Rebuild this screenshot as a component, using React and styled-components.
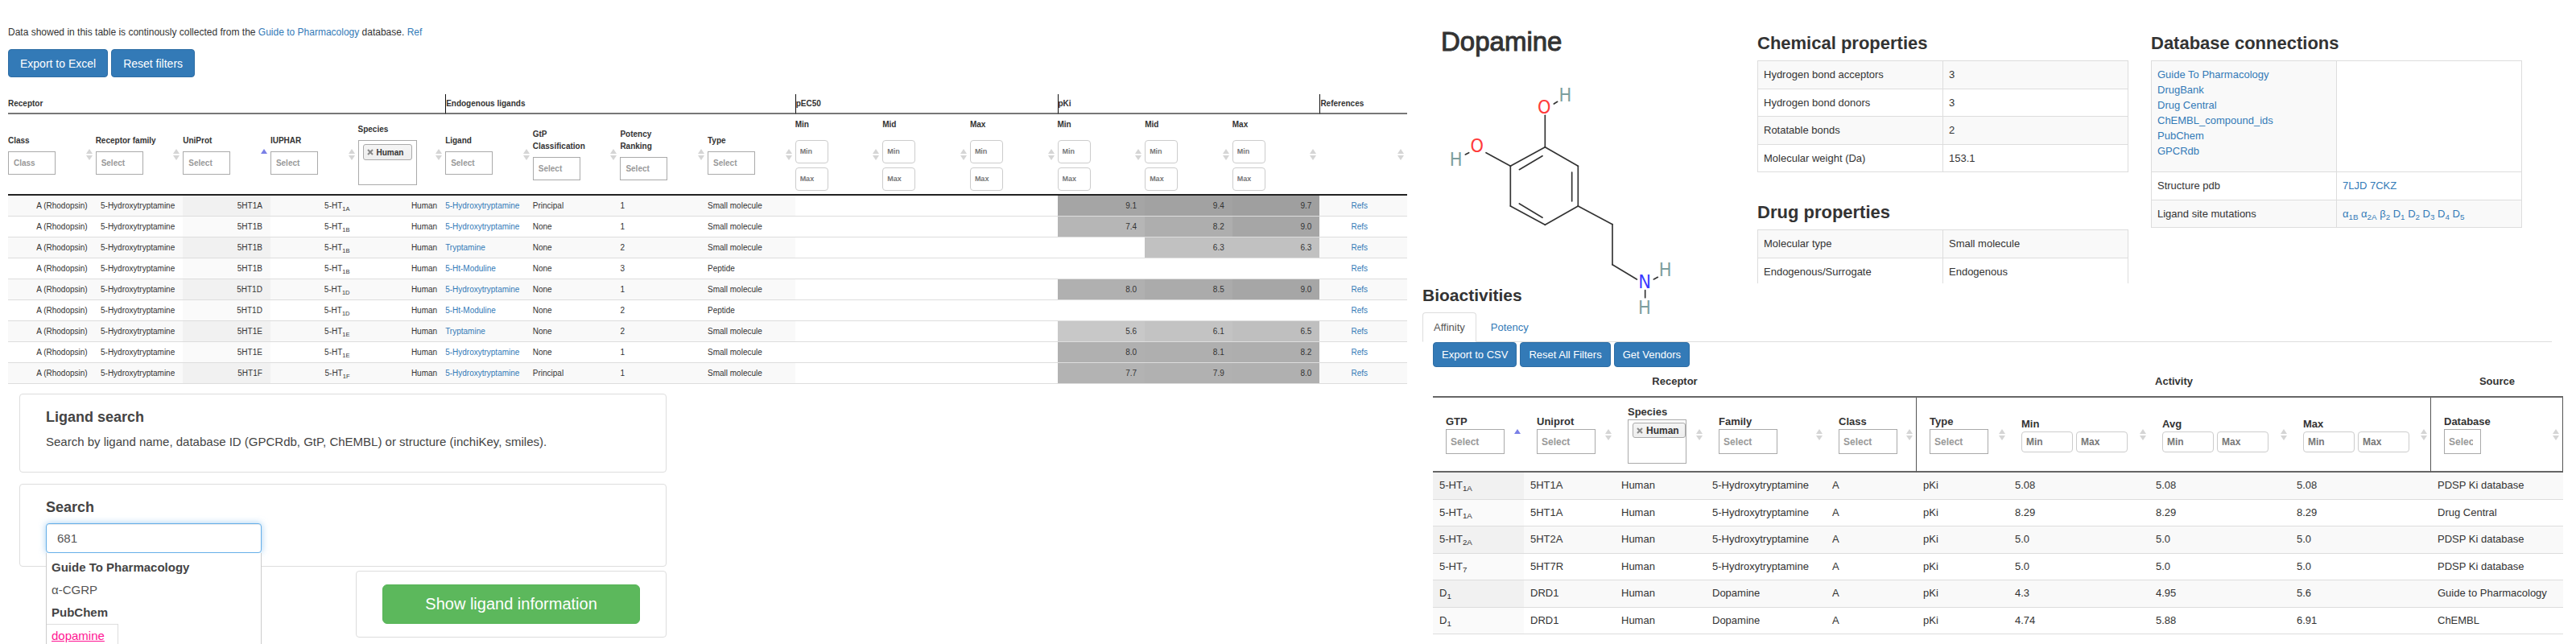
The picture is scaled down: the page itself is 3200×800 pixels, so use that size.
import React from "react";
import styled, { createGlobalStyle, css } from "styled-components";

const GlobalStyle = createGlobalStyle`
  *, *::before, *::after { box-sizing: border-box; }
  body {
    margin: 0;
    background: #fff;
    color: #333;
    font-family: "Helvetica Neue", "Liberation Sans", Arial, sans-serif;
    font-size: 13px;
  }
  h1, h2, p, ul { margin: 0; padding: 0; }
  button, input { font-family: inherit; }
  sub { font-size: 75%; line-height: 0; vertical-align: baseline; position: relative; bottom: -3px; }
`;

const Page = styled.div`
  display: grid;
  grid-template-columns: minmax(0, 1757fr) minmax(0, 1443fr);
  min-height: 100vh;
  overflow: hidden;
`;

const LeftPanel = styled.main`
  padding: 32px 9px 0 10px;
`;

const RightPanel = styled.section`
  min-width: 0;
`;

const Link = styled.a`
  color: #337ab7;
  text-decoration: none;
`;

const Intro = styled.p`
  font-size: 12px;
  line-height: 16px;
`;

const ButtonBar = styled.div`
  display: flex;
  gap: 4px;
  margin: ${(p) => p.$margin};
`;

const PrimaryButton = styled.button`
  height: ${(p) => (p.$large ? 35 : 31)}px;
  padding: 0 ${(p) => (p.$large ? 14 : 10)}px;
  border: 1px solid #2e6da4;
  border-radius: 4px;
  background: #337ab7;
  color: #fff;
  font-size: ${(p) => (p.$large ? 14 : 13)}px;
`;

const SortButton = styled.button`
  flex: none;
  display: block;
  width: 8px;
  height: 14px;
  padding: 0;
  border: 0;
  background: none;
`;

const HeadCell = styled.div`
  display: flex;
  align-items: center;
  justify-content: space-between;
`;

const Field = styled.label`
  display: block;
  white-space: pre-line;
`;

const inputBase = css`
  display: block;
  border: 1px solid #aaa;
  background: #fff;
  font-weight: bold;
  &::placeholder { color: #999; opacity: 1; }
`;

const RangeBase = css`
  ${inputBase}
  border-color: #ccc;
  border-radius: 4px;
  padding: 0 5px;
  &::placeholder { color: #777; opacity: 1; }
`;

const Chip = styled.span`
  display: flex;
  align-items: center;
  gap: 4px;
  border: 1px solid #aaa;
  border-radius: 3px;
  background: linear-gradient(#f4f4f4, #eee);
  font-weight: bold;
  color: #333;
`;

const ChipClose = styled.button`
  display: flex;
  padding: 0;
  border: 0;
  background: none;
`;

const ChipBox = styled.div`
  border: 1px solid #aaa;
  background: #fff;
`;

/* Endogenous ligand table */

const LigandTable = styled.table`
  width: 100%;
  table-layout: fixed;
  border-collapse: separate;
  border-spacing: 0;
  font-size: 10px;
  line-height: 15px;
  text-align: left;

  th, td { padding: 0; }
`;

const GroupHead = styled.th`
  height: 25px;
  border-bottom: 2px solid #777;
  border-left: ${(p) => (p.$divided ? "1px solid #111" : 0)};
`;

const FilterHead = styled.th`
  height: 101px;
  border-bottom: 2px solid #222;

  ${HeadCell} { padding-right: 4px; }
  ${Chip} { height: 20px; padding: 0 4px; font-size: 10px; }
  ${ChipBox} { width: 73px; height: 56px; margin-top: 6px; padding: 4px 5px; }
`;

const FilterInput = styled.input`
  ${inputBase}
  width: 59px;
  height: 29px;
  margin-top: 6px;
  padding: 0 6px;
  font-size: 10px;
`;

const StackedRange = styled.div`
  display: grid;
  gap: 5px;
  padding-top: 12px;
`;

const StackedInput = styled.input`
  ${RangeBase}
  width: 41px;
  height: 29px;
  font-size: 9px;
`;

const LigandRow = styled.tr`
  td { background: #fff; }
  &:nth-child(odd) td { background: #f9f9f9; }
`;

const LigandCell = styled.td`
  height: 26px;
  border-bottom: 1px solid #ddd;
  text-align: ${(p) => p.$align || "left"};
  && { padding-right: ${(p) => (p.$align ? 10 : 0)}px; }
`;

const SortedCell = styled(LigandCell)`
  ${LigandRow}:nth-child(n) & { background: #fafafa; }
  ${LigandRow}:nth-child(odd) & { background: #f1f1f1; }
`;

const HeatCell = styled(LigandCell)`
  ${LigandRow}:nth-child(n) & { background: ${(p) => p.$shade}; }
`;

/* Ligand search cards */

const SearchArea = styled.div`
  display: grid;
  max-width: 804px;
  margin: 12px 0 0 14px;
`;

const Card = styled.section`
  border: 1px solid #ddd;
  border-radius: 4px;
  background: #fff;
`;

const InfoCard = styled(Card)`
  height: 98px;
  padding: 18px 32px 0;
`;

const SearchCard = styled(Card)`
  height: 103px;
  margin-top: 14px;
  padding: 18px 32px 0;
`;

const ActionCard = styled(Card)`
  width: 48%;
  margin-top: 5px;
  padding: 16px 32px;
  justify-self: end;
`;

const CardTitle = styled.h2`
  font-size: 18px;
  line-height: 20px;
  color: #444;
`;

const CardText = styled.p`
  margin-top: 11px;
  font-size: 15px;
  line-height: 20px;
  color: #444;
`;

const Combo = styled.div`
  position: relative;
  width: 268px;
  margin-top: 10px;
`;

const SearchInput = styled.input`
  display: block;
  width: 100%;
  height: 37px;
  padding: 0 13px;
  border: 1px solid #66afe9;
  border-radius: 4px;
  outline: 0;
  box-shadow: inset 0 1px 1px rgba(0, 0, 0, 0.08), 0 0 8px rgba(102, 175, 233, 0.6);
  color: #555;
  font-size: 15px;
`;

const Suggestions = styled.ul`
  position: absolute;
  top: 37px;
  left: 0;
  right: 0;
  z-index: 2;
  padding: 4px 0;
  border: 1px solid #ccc;
  border-top: 0;
  background: #fff;
  list-style: none;
  font-size: 15px;
  line-height: 28px;
  color: #555;
`;

const Suggestion = styled.li`
  padding-left: 6px;
  color: ${(p) => (p.$group ? "#444" : "inherit")};
  font-weight: ${(p) => (p.$group ? "bold" : "normal")};
`;

const SelectedSuggestion = styled(Suggestion)`
  width: 89px;
  border: solid #ddd;
  border-width: 1px 1px 0 0;
`;

const PinkLink = styled.a`
  color: #ff1493;
`;

const ShowButton = styled.button`
  display: block;
  width: 100%;
  height: 49px;
  border: 1px solid #56b456;
  border-radius: 6px;
  background: #5cb85c;
  color: #fff;
  font-size: 20px;
`;

/* Ligand summary */

const Summary = styled.div`
  display: grid;
  grid-template-columns: 365fr 461fr 461fr;
  column-gap: 28px;
  height: 352px;
  padding: 0 67px 0 33px;
`;

const Column = styled.div`
  min-width: 0;
  height: 352px;
  padding-top: ${(p) => p.$top || 42}px;
  overflow: ${(p) => (p.$clip ? "hidden" : "visible")};
`;

const PageTitle = styled.h1`
  font-size: 33px;
  line-height: 38px;
  font-weight: normal;
  -webkit-text-stroke: 1px #333;
`;

const SectionTitle = styled.h2`
  margin-top: ${(p) => (p.$spaced ? 38 : 0)}px;
  font-size: 22px;
  line-height: 24px;
`;

const Molecule = styled.svg`
  display: block;
  width: 280px;
  height: 300px;
  margin-top: 24px;
  overflow: visible;
`;

const PropertyTable = styled.table`
  width: 100%;
  height: ${(p) => p.$height}px;
  margin-top: 9px;
  table-layout: fixed;
  border-collapse: collapse;
  text-align: left;

  th, td {
    padding: 7px;
    border: 1px solid #ddd;
    line-height: 19px;
    font-weight: normal;
    vertical-align: top;
  }
  tr:nth-child(odd) > * { background: #f9f9f9; }
`;

const BlankCell = styled.td`
  &&& { background: #fff; }
`;

const LinkList = styled.ul`
  list-style: none;
  padding-bottom: 8px;
`;

/* Bioactivities */

const BioHeader = styled.div`
  padding: 4px 30px 0 10px;
`;

const BioTitle = styled.h2`
  font-size: 21px;
  line-height: 22px;
`;

const Tabs = styled.nav`
  display: flex;
  height: 37px;
  margin-top: 10px;
  border-bottom: 1px solid #ddd;
`;

const Tab = styled.a`
  height: 37px;
  padding: 0 13px;
  border: 1px solid transparent;
  border-radius: 4px 4px 0 0;
  line-height: 36px;
  text-decoration: none;
  color: #337ab7;
  margin-right: 4px;
  ${(p) => p.$active && css`
    border-color: #ddd #ddd #fff;
    background: #fff;
    color: #555;
  `}
`;

const BioBody = styled.div`
  padding: 0 16px 0 23px;
`;

const BioTable = styled.table`
  width: 100%;
  height: 332px;
  table-layout: fixed;
  border-collapse: separate;
  border-spacing: 0;
  line-height: 18px;
  text-align: left;
`;

const BioGroup = styled.th`
  height: 38px;
  padding: 0;
  border-bottom: 2px solid #666;
  text-align: center;
`;

const BioFilter = styled.th`
  height: 93px;
  padding: 0 4px 0 16px;
  border-bottom: 2px solid #666;
  border-right: ${(p) => (p.$edge ? "1px solid #555" : 0)};

  ${Chip} { width: 66px; height: 19px; padding: 0 4px; font-size: 12px; }
  ${ChipBox} { width: 73px; height: 55px; padding: 3px 5px; }
`;

const BioInput = styled.input`
  ${inputBase}
  width: ${(p) => (p.$narrow ? 46 : 73)}px;
  height: 31px;
  padding: 0 ${(p) => (p.$narrow ? 9 : 5)}px 0 5px;
  font-size: 12px;
`;

const RangePair = styled.div`
  display: flex;
  gap: 4px;
`;

const RangeInput = styled.input`
  ${RangeBase}
  width: 64px;
  height: 26px;
  font-size: 12px;
`;

const BioRow = styled.tr`
  td { background: #fff; }
  &:nth-child(odd) td { background: #f9f9f9; }
  &&& td:first-child { background: #fafafa; }
  &&&:nth-child(odd) td:first-child { background: #f1f1f1; }
`;

const BioCell = styled.td`
  padding: 7px 8px;
  border-bottom: 1px solid #ddd;
`;

function Sort({ name, ascending }) {
  return (
    <SortButton type="button" aria-label={`Sort by ${name}`}>
      <svg width="8" height="14" viewBox="0 0 8 14" aria-hidden="true">
        <path d="M0 6L4 0L8 6Z" fill={ascending ? "#7a80e6" : "#d5d5d5"} />
        {!ascending && <path d="M0 8L4 14L8 8Z" fill="#d5d5d5" />}
      </svg>
    </SortButton>
  );
}

function SpeciesBox() {
  return (
    <ChipBox>
      <Chip>
        <ChipClose type="button" aria-label="Remove Human">
          <svg width="8" height="8" viewBox="0 0 8 8" aria-hidden="true">
            <path d="M1 1L7 7M7 1L1 7" stroke="#888" strokeWidth="2" />
          </svg>
        </ChipClose>
        Human
      </Chip>
    </ChipBox>
  );
}

const ligandGroups = [
  ["Receptor", 5],
  ["Endogenous ligands", 4],
  ["pEC50", 3],
  ["pKi", 3],
  ["References", 1],
];

const ligandFilters = [
  ["Class", "text", "Class"],
  ["Receptor family", "text"],
  ["UniProt", "text"],
  ["IUPHAR", "text"],
  ["Species", "species"],
  ["Ligand", "text"],
  ["GtP\nClassification", "text"],
  ["Potency\nRanking", "text"],
  ["Type", "text"],
  ["Min", "range", "pEC50"],
  ["Mid", "range", "pEC50"],
  ["Max", "range", "pEC50"],
  ["Min", "range", "pKi"],
  ["Mid", "range", "pKi"],
  ["Max", "range", "pKi"],
];

const ligandRows = [
  ["1A", "5-Hydroxytryptamine", "Principal", 1, "Small molecule", "9.1", "9.4", "9.7"],
  ["1B", "5-Hydroxytryptamine", "None", 1, "Small molecule", "7.4", "8.2", "9.0"],
  ["1B", "Tryptamine", "None", 2, "Small molecule", "", "6.3", "6.3"],
  ["1B", "5-Ht-Moduline", "None", 3, "Peptide", "", "", ""],
  ["1D", "5-Hydroxytryptamine", "None", 1, "Small molecule", "8.0", "8.5", "9.0"],
  ["1D", "5-Ht-Moduline", "None", 2, "Peptide", "", "", ""],
  ["1E", "Tryptamine", "None", 2, "Small molecule", "5.6", "6.1", "6.5"],
  ["1E", "5-Hydroxytryptamine", "None", 1, "Small molecule", "8.0", "8.1", "8.2"],
  ["1F", "5-Hydroxytryptamine", "Principal", 1, "Small molecule", "7.7", "7.9", "8.0"],
];

function shadeFor(value) {
  if (!value) return "#fff";
  const level = Math.round(200 - (Number(value) - 5.6) * 10);
  return `rgb(${level}, ${level}, ${level})`;
}

function LigandFilter({ name, kind, hint }) {
  if (kind === "species") {
    return (
      <div>
        {name}
        <SpeciesBox />
      </div>
    );
  }
  if (kind === "range") {
    return (
      <div>
        {name}
        <StackedRange>
          <StackedInput placeholder="Min" aria-label={`${hint} ${name} from`} />
          <StackedInput placeholder="Max" aria-label={`${hint} ${name} to`} />
        </StackedRange>
      </div>
    );
  }
  return (
    <Field>
      {name}
      <FilterInput placeholder={hint || "Select"} />
    </Field>
  );
}

function EndogenousLigands() {
  return (
    <LigandTable>
      <thead>
        <tr>
          {ligandGroups.map(([name, span], i) => (
            <GroupHead key={name} colSpan={span} $divided={i > 0}>{name}</GroupHead>
          ))}
        </tr>
        <tr>
          {ligandFilters.map(([name, kind, hint], i) => (
            <FilterHead key={i}>
              <HeadCell>
                <LigandFilter name={name} kind={kind} hint={hint} />
                <Sort name={name} ascending={name === "UniProt"} />
              </HeadCell>
            </FilterHead>
          ))}
          <FilterHead>
            <HeadCell>
              <span />
              <Sort name="References" />
            </HeadCell>
          </FilterHead>
        </tr>
      </thead>
      <tbody>
        {ligandRows.map(([code, ligand, rank, potency, type, ...pki], i) => (
          <LigandRow key={i}>
            <LigandCell $align="right">A (Rhodopsin)</LigandCell>
            <LigandCell $align="right">5-Hydroxytryptamine</LigandCell>
            <SortedCell $align="right">5HT{code}</SortedCell>
            <LigandCell $align="right">5-HT<sub>{code}</sub></LigandCell>
            <LigandCell $align="right">Human</LigandCell>
            <LigandCell><Link href="#ligand">{ligand}</Link></LigandCell>
            <LigandCell>{rank}</LigandCell>
            <LigandCell>{potency}</LigandCell>
            <LigandCell>{type}</LigandCell>
            <HeatCell $shade="#fff" />
            <HeatCell $shade="#fff" />
            <HeatCell $shade="#fff" />
            {pki.map((value, k) => (
              <HeatCell key={k} $align="right" $shade={shadeFor(value)}>{value}</HeatCell>
            ))}
            <LigandCell $align="center"><Link href="#refs">Refs</Link></LigandCell>
          </LigandRow>
        ))}
      </tbody>
    </LigandTable>
  );
}

function LigandSearch() {
  return (
    <SearchArea>
      <InfoCard>
        <CardTitle>Ligand search</CardTitle>
        <CardText>
          Search by ligand name, database ID (GPCRdb, GtP, ChEMBL) or structure (inchiKey, smiles).
        </CardText>
      </InfoCard>
      <SearchCard>
        <CardTitle as="label" htmlFor="ligand-query"><b>Search</b></CardTitle>
        <Combo>
          <SearchInput id="ligand-query" defaultValue="681" />
          <Suggestions>
            <Suggestion $group>Guide To Pharmacology</Suggestion>
            <Suggestion>α-CGRP</Suggestion>
            <Suggestion $group>PubChem</Suggestion>
            <SelectedSuggestion><PinkLink href="#dopamine">dopamine</PinkLink></SelectedSuggestion>
          </Suggestions>
        </Combo>
      </SearchCard>
      <ActionCard>
        <ShowButton type="button">Show ligand information</ShowButton>
      </ActionCard>
    </SearchArea>
  );
}

const bonds = [
  [508, 430, 508, 548],
  [508, 548, 631, 619],
  [631, 619, 631, 768],
  [608, 642, 608, 750],
  [631, 768, 508, 838],
  [508, 838, 379, 768],
  [498, 811, 412, 759],
  [379, 768, 379, 619],
  [379, 619, 508, 548],
  [412, 632, 498, 581],
  [379, 619, 288, 569],
  [631, 768, 759, 836],
  [759, 836, 759, 986],
  [759, 986, 850, 1041],
  [541, 387, 554, 379],
  [211, 576, 224, 569],
  [913, 1041, 928, 1033],
  [881, 1082, 881, 1109],
];

const atoms = [
  ["O", 505, 422, "#ff3b3b"],
  ["H", 583, 377, "#7d9e9e"],
  ["O", 254, 566, "#ff3b3b"],
  ["H", 176, 617, "#7d9e9e"],
  ["N", 879, 1075, "#3a3aff"],
  ["H", 956, 1030, "#7d9e9e"],
  ["H", 879, 1170, "#7d9e9e"],
];

function DopamineStructure() {
  return (
    <Molecule viewBox="120 285 840 900" role="img" aria-label="Structure of dopamine">
      <g stroke="#333" strokeWidth="5" strokeLinecap="round">
        {bonds.map(([x1, y1, x2, y2], i) => (
          <line key={i} x1={x1} y1={y1} x2={x2} y2={y2} />
        ))}
      </g>
      <g fontFamily="'Liberation Sans Narrow', 'DejaVu Sans Condensed', 'Liberation Sans', sans-serif" fontSize="70" textAnchor="middle">
        {atoms.map(([symbol, x, y, fill], i) => (
          <text key={i} x={x} y={y} fill={fill}>{symbol}</text>
        ))}
      </g>
    </Molecule>
  );
}

const chemical = [
  ["Hydrogen bond acceptors", "3"],
  ["Hydrogen bond donors", "3"],
  ["Rotatable bonds", "2"],
  ["Molecular weight (Da)", "153.1"],
];

const drug = [
  ["Molecular type", "Small molecule"],
  ["Endogenous/Surrogate", "Endogenous"],
];

const databases = ["Guide To Pharmacology", "DrugBank", "Drug Central", "ChEMBL_compound_ids", "PubChem", "GPCRdb"];

const mutations = [["α", "1B"], ["α", "2A"], ["β", "2"], ["D", "1"], ["D", "2"], ["D", "3"], ["D", "4"], ["D", "5"]];

function Properties({ rows, height }) {
  return (
    <PropertyTable $height={height}>
      <tbody>
        {rows.map(([name, value]) => (
          <tr key={name}>
            <th scope="row">{name}</th>
            <td>{value}</td>
          </tr>
        ))}
      </tbody>
    </PropertyTable>
  );
}

const bioColumns = [113, 113, 113, 149, 113, 114, 175, 175, 175, 164];
const bioTotal = bioColumns.reduce((a, b) => a + b, 0);

const bioFilters = [
  ["GTP", "text"],
  ["Uniprot", "text"],
  ["Species", "species"],
  ["Family", "text"],
  ["Class", "text"],
  ["Type", "text"],
  ["Min", "range"],
  ["Avg", "range"],
  ["Max", "range"],
  ["Database", "narrow"],
];

const bioRows = [
  ["5-HT", "1A", "5HT1A", "5-Hydroxytryptamine", "5.08", "5.08", "5.08", "PDSP Ki database"],
  ["5-HT", "1A", "5HT1A", "5-Hydroxytryptamine", "8.29", "8.29", "8.29", "Drug Central"],
  ["5-HT", "2A", "5HT2A", "5-Hydroxytryptamine", "5.0", "5.0", "5.0", "PDSP Ki database"],
  ["5-HT", "7", "5HT7R", "5-Hydroxytryptamine", "5.0", "5.0", "5.0", "PDSP Ki database"],
  ["D", "1", "DRD1", "Dopamine", "4.3", "4.95", "5.6", "Guide to Pharmacology"],
  ["D", "1", "DRD1", "Dopamine", "4.74", "5.88", "6.91", "ChEMBL"],
];

function BioFilterField({ name, kind }) {
  if (kind === "species") {
    return (
      <div>
        {name}
        <SpeciesBox />
      </div>
    );
  }
  if (kind === "range") {
    return (
      <div>
        {name}
        <RangePair>
          <RangeInput placeholder="Min" aria-label={`${name} from`} />
          <RangeInput placeholder="Max" aria-label={`${name} to`} />
        </RangePair>
      </div>
    );
  }
  return (
    <Field>
      {name}
      <BioInput placeholder="Select" $narrow={kind === "narrow"} />
    </Field>
  );
}

function Bioactivities() {
  return (
    <BioTable>
      <colgroup>
        {bioColumns.map((w, i) => (
          <col key={i} style={{ width: `${(w / bioTotal) * 100}%` }} />
        ))}
      </colgroup>
      <thead>
        <tr>
          <BioGroup colSpan={5}>Receptor</BioGroup>
          <BioGroup colSpan={4}>Activity</BioGroup>
          <BioGroup>Source</BioGroup>
        </tr>
        <tr>
          {bioFilters.map(([name, kind]) => (
            <BioFilter key={name} $edge={["Class", "Max", "Database"].includes(name)}>
              <HeadCell>
                <BioFilterField name={name} kind={kind} />
                <Sort name={name} ascending={name === "GTP"} />
              </HeadCell>
            </BioFilter>
          ))}
        </tr>
      </thead>
      <tbody>
        {bioRows.map(([base, index, uniprot, family, min, avg, max, source], i) => (
          <BioRow key={i}>
            <BioCell>{base}<sub>{index}</sub></BioCell>
            <BioCell>{uniprot}</BioCell>
            <BioCell>Human</BioCell>
            <BioCell>{family}</BioCell>
            <BioCell>A</BioCell>
            <BioCell>pKi</BioCell>
            <BioCell>{min}</BioCell>
            <BioCell>{avg}</BioCell>
            <BioCell>{max}</BioCell>
            <BioCell>{source}</BioCell>
          </BioRow>
        ))}
      </tbody>
    </BioTable>
  );
}

export default function App() {
  return (
    <>
      <GlobalStyle />
      <Page>
        <LeftPanel>
          <Intro>
            Data showed in this table is continously collected from the{" "}
            <Link href="#gtp">Guide to Pharmacology</Link> database. <Link href="#ref">Ref</Link>
          </Intro>
          <ButtonBar $margin="13px 0 21px">
            <PrimaryButton type="button" $large>Export to Excel</PrimaryButton>
            <PrimaryButton type="button" $large>Reset filters</PrimaryButton>
          </ButtonBar>
          <EndogenousLigands />
          <LigandSearch />
        </LeftPanel>

        <RightPanel>
          <Summary>
            <Column $top={33}>
              <PageTitle>Dopamine</PageTitle>
              <DopamineStructure />
            </Column>
            <Column $clip>
              <SectionTitle>Chemical properties</SectionTitle>
              <Properties rows={chemical} height={139} />
              <SectionTitle $spaced>Drug properties</SectionTitle>
              <Properties rows={drug} height={70} />
            </Column>
            <Column>
              <SectionTitle>Database connections</SectionTitle>
              <PropertyTable $height={208}>
                <tbody>
                  <tr>
                    <td>
                      <LinkList>
                        {databases.map((name) => (
                          <li key={name}><Link href="#database">{name}</Link></li>
                        ))}
                      </LinkList>
                    </td>
                    <BlankCell />
                  </tr>
                  <tr>
                    <th scope="row">Structure pdb</th>
                    <td><Link href="#7LJD">7LJD</Link> <Link href="#7CKZ">7CKZ</Link></td>
                  </tr>
                  <tr>
                    <th scope="row">Ligand site mutations</th>
                    <td>
                      {mutations.map(([base, index]) => (
                        <React.Fragment key={base + index}>
                          <Link href="#mutation">{base}<sub>{index}</sub></Link>{" "}
                        </React.Fragment>
                      ))}
                    </td>
                  </tr>
                </tbody>
              </PropertyTable>
            </Column>
          </Summary>

          <BioHeader>
            <BioTitle>Bioactivities</BioTitle>
            <Tabs>
              <Tab href="#affinity" $active>Affinity</Tab>
              <Tab href="#potency">Potency</Tab>
            </Tabs>
          </BioHeader>
          <BioBody>
            <ButtonBar $margin="0">
              <PrimaryButton type="button">Export to CSV</PrimaryButton>
              <PrimaryButton type="button">Reset All Filters</PrimaryButton>
              <PrimaryButton type="button">Get Vendors</PrimaryButton>
            </ButtonBar>
            <Bioactivities />
          </BioBody>
        </RightPanel>
      </Page>
    </>
  );
}
